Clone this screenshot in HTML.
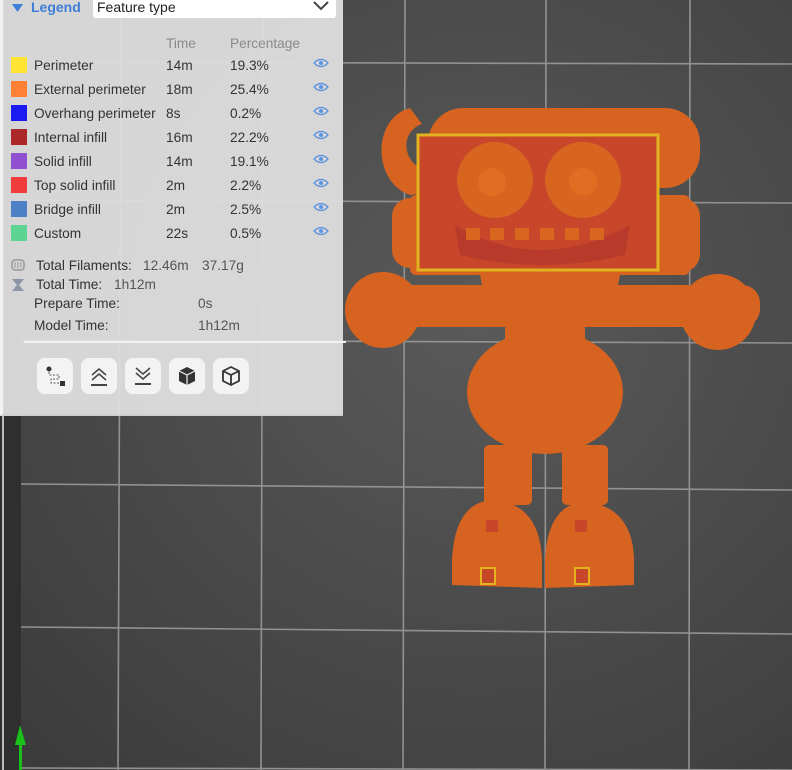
<!DOCTYPE html>
<html><head><meta charset="utf-8"><style>
*{margin:0;padding:0;box-sizing:border-box}
body{width:792px;height:770px;overflow:hidden;position:relative;background:#454545;font-family:"Liberation Sans","DejaVu Sans",sans-serif}
#bg{position:absolute;left:0;top:0}
#panel{position:absolute;left:0;top:0;width:343px;height:416px;background:rgba(222,222,222,0.95);border-left:3px solid #f2f2f2;border-bottom:2px solid #cfcfcf}
.t{position:absolute;font-size:13.7px;color:#333;white-space:nowrap;line-height:15px}
.g{color:#8a8a8a}
.sw{position:absolute;left:8px;width:16px;height:16px}
.btn{position:absolute;top:358px;width:36px;height:36px;background:#f3f3f3;border-radius:8px}
</style></head><body>
<svg id="bg" width="792" height="770">
<defs><radialGradient id="rg" cx="0.6" cy="0.4" r="0.8"><stop offset="0" stop-color="#5a5a5a"/><stop offset="1" stop-color="#3c3c3c"/></radialGradient></defs>
<rect width="792" height="770" fill="url(#rg)"/>
<rect x="0" y="0" width="21" height="770" fill="#2f2f2f"/>
<g stroke="#9a9a9a" stroke-width="1.6" opacity="0.9">
<line x1="121" y1="0" x2="118" y2="770"/><line x1="263" y1="0" x2="261" y2="770"/><line x1="405" y1="0" x2="403" y2="770"/><line x1="546" y1="0" x2="545" y2="770"/><line x1="690" y1="0" x2="689" y2="770"/>
<line x1="21" y1="62" x2="792" y2="64"/><line x1="21" y1="200" x2="792" y2="203"/><line x1="21" y1="340" x2="792" y2="343"/><line x1="21" y1="484" x2="792" y2="490"/><line x1="21" y1="627" x2="792" y2="634"/><line x1="21" y1="768" x2="792" y2="770"/>
</g>
<line x1="3" y1="0" x2="3" y2="770" stroke="#bbb" stroke-width="2"/>
<path d="M20 725 L15 745 L19 745 L19 770 L22 770 L22 745 L26 745 Z" fill="#19c019"/>
<g fill="#d6631f">
<path d="M410 108 C372 118 372 182 410 195 L432 192 L432 172 C402 168 398 132 422 124 Z"/>
<rect x="428" y="108" width="272" height="80" rx="35"/>
<rect x="392" y="198" width="40" height="70" rx="18"/>
<rect x="655" y="198" width="45" height="74" rx="18"/>
<rect x="410" y="195" width="280" height="80" rx="6"/>
<rect x="418" y="135" width="240" height="135" fill="#c8472a"/>
<rect x="418" y="135" width="240" height="135" fill="none" stroke="#e0b31f" stroke-width="3"/>
<circle cx="495" cy="180" r="38" fill="#d8651f"/><circle cx="583" cy="180" r="38" fill="#d8651f"/>
<circle cx="492" cy="182" r="14" fill="#e06d22"/><circle cx="583" cy="182" r="14" fill="#e06d22"/>
<path d="M455 225 Q540 275 630 225 L625 255 Q540 275 460 255 Z" fill="#b83a2a"/>
<g fill="#d9661f"><rect x="466" y="228" width="14" height="12"/><rect x="490" y="228" width="14" height="12"/><rect x="515" y="228" width="14" height="12"/><rect x="540" y="228" width="14" height="12"/><rect x="565" y="228" width="14" height="12"/><rect x="590" y="228" width="14" height="12"/></g>
<rect x="390" y="285" width="370" height="42" rx="18"/>
<circle cx="383" cy="310" r="38"/><circle cx="718" cy="312" r="38"/>
<path d="M480 275 L620 275 L610 325 L490 325 Z"/>
<ellipse cx="545" cy="392" rx="78" ry="62"/>
<rect x="505" y="320" width="80" height="40" rx="10"/>
<rect x="484" y="445" width="48" height="60" rx="5"/><rect x="562" y="445" width="46" height="60" rx="5"/>
<path d="M452 585 L452 560 Q455 500 495 500 Q540 505 542 560 L542 588 Z"/>
<path d="M545 588 L545 560 Q548 500 590 502 Q633 510 634 560 L634 585 Z"/>
<rect x="486" y="520" width="12" height="12" fill="#c8472a"/><rect x="575" y="520" width="12" height="12" fill="#c8472a"/>
<rect x="481" y="568" width="14" height="16" fill="#c8472a" stroke="#e0b31f" stroke-width="2"/><rect x="575" y="568" width="14" height="16" fill="#c8472a" stroke="#e0b31f" stroke-width="2"/>
</g>
</svg>
<div id="panel">
<svg style="position:absolute;left:9px;top:3px" width="12" height="10"><path d="M0 1 L11 1 L5.5 9 Z" fill="#3d7fd6"/></svg>
<div class="t" style="left:28px;top:0px;color:#3d7fd6;font-weight:bold;font-size:14px">Legend</div>
<div style="position:absolute;left:90px;top:-4px;width:243px;height:22px;background:#fff;border-radius:3px"></div>
<div class="t" style="left:94px;top:0px;font-size:14px;color:#222">Feature type</div>
<svg style="position:absolute;left:310px;top:1px" width="16" height="10"><path d="M1 1 L8 8 L15 1" stroke="#444" stroke-width="2" fill="none"/></svg>
<div class="t g" style="left:163px;top:36px">Time</div>
<div class="t g" style="left:227px;top:36px">Percentage</div>

<div class="sw" style="top:57px;background:#ffe433"></div><div class="t" style="left:31px;top:58px">Perimeter</div><div class="t" style="left:163px;top:58px">14m</div><div class="t" style="left:227px;top:58px">19.3%</div>
<div class="sw" style="top:81px;background:#ff7f35"></div><div class="t" style="left:31px;top:82px">External perimeter</div><div class="t" style="left:163px;top:82px">18m</div><div class="t" style="left:227px;top:82px">25.4%</div>
<div class="sw" style="top:105px;background:#1c1cf2"></div><div class="t" style="left:31px;top:106px">Overhang perimeter</div><div class="t" style="left:163px;top:106px">8s</div><div class="t" style="left:227px;top:106px">0.2%</div>
<div class="sw" style="top:129px;background:#ab2828"></div><div class="t" style="left:31px;top:130px">Internal infill</div><div class="t" style="left:163px;top:130px">16m</div><div class="t" style="left:227px;top:130px">22.2%</div>
<div class="sw" style="top:153px;background:#9150d0"></div><div class="t" style="left:31px;top:154px">Solid infill</div><div class="t" style="left:163px;top:154px">14m</div><div class="t" style="left:227px;top:154px">19.1%</div>
<div class="sw" style="top:177px;background:#f03c3c"></div><div class="t" style="left:31px;top:178px">Top solid infill</div><div class="t" style="left:163px;top:178px">2m</div><div class="t" style="left:227px;top:178px">2.2%</div>
<div class="sw" style="top:201px;background:#4d80c4"></div><div class="t" style="left:31px;top:202px">Bridge infill</div><div class="t" style="left:163px;top:202px">2m</div><div class="t" style="left:227px;top:202px">2.5%</div>
<div class="sw" style="top:225px;background:#5ed492"></div><div class="t" style="left:31px;top:226px">Custom</div><div class="t" style="left:163px;top:226px">22s</div><div class="t" style="left:227px;top:226px">0.5%</div>

<svg style="position:absolute;left:310px;top:56px" width="18" height="180">
<g fill="none" stroke="#5b93e0" stroke-width="1.3">
<path d="M1 7 Q8 0 15 7 Q8 14 1 7Z"/><path d="M1 31 Q8 24 15 31 Q8 38 1 31Z"/><path d="M1 55 Q8 48 15 55 Q8 62 1 55Z"/><path d="M1 79 Q8 72 15 79 Q8 86 1 79Z"/><path d="M1 103 Q8 96 15 103 Q8 110 1 103Z"/><path d="M1 127 Q8 120 15 127 Q8 134 1 127Z"/><path d="M1 151 Q8 144 15 151 Q8 158 1 151Z"/><path d="M1 175 Q8 168 15 175 Q8 182 1 175Z"/>
</g>
<g fill="#5b93e0"><circle cx="8" cy="7" r="2"/><circle cx="8" cy="31" r="2"/><circle cx="8" cy="55" r="2"/><circle cx="8" cy="79" r="2"/><circle cx="8" cy="103" r="2"/><circle cx="8" cy="127" r="2"/><circle cx="8" cy="151" r="2"/><circle cx="8" cy="175" r="2"/></g>
</svg>

<svg style="position:absolute;left:8px;top:259px" width="14" height="32"><rect x="1" y="1" width="12" height="10" rx="3" fill="none" stroke="#999" stroke-width="1.5"/><path d="M4 3v6M7 3v6M10 3v6" stroke="#999"/><path d="M1 20h12L8 26l5 6H1l5-6Z" fill="#8a96a8"/></svg>
<div class="t" style="left:33px;top:258px">Total Filaments:</div><div class="t" style="left:140px;top:258px;color:#555">12.46m</div><div class="t" style="left:199px;top:258px;color:#555">37.17g</div>
<div class="t" style="left:33px;top:277px">Total Time:</div><div class="t" style="left:111px;top:277px;color:#555">1h12m</div>
<div class="t" style="left:31px;top:296px">Prepare Time:</div><div class="t" style="left:195px;top:296px;color:#555">0s</div>
<div class="t" style="left:31px;top:318px">Model Time:</div><div class="t" style="left:195px;top:318px;color:#555">1h12m</div>
<div style="position:absolute;left:21px;top:341px;width:322px;height:2px;background:#f2f2f2"></div>

<div class="btn" style="left:34px"><svg width="36" height="36"><circle cx="12" cy="11" r="2.5" fill="#333"/><path d="M12 14v3h10v4h-8v4h12" stroke="#555" stroke-dasharray="2 1.5" fill="none"/><rect x="23" y="23" width="5" height="5" fill="#333"/></svg></div>
<div class="btn" style="left:78px"><svg width="36" height="36"><path d="M11 17l7-6 7 6M11 22l7-6 7 6" stroke="#444" stroke-width="1.5" fill="none"/><path d="M10 27h16" stroke="#444" stroke-width="2"/></svg></div>
<div class="btn" style="left:122px"><svg width="36" height="36"><path d="M11 10l7 6 7-6M11 15l7 6 7-6" stroke="#444" stroke-width="1.5" fill="none"/><path d="M10 26h16" stroke="#444" stroke-width="2"/></svg></div>
<div class="btn" style="left:166px"><svg width="36" height="36"><path d="M18 9l8 4v10l-8 4-8-4V13Z" fill="#333"/><path d="M10 13l8 4 8-4M18 17v10" stroke="#f3f3f3" stroke-width="1.2" fill="none"/></svg></div>
<div class="btn" style="left:210px"><svg width="36" height="36"><path d="M18 9l8 4v10l-8 4-8-4V13Z M10 13l8 4 8-4M18 17v10" stroke="#333" stroke-width="1.8" fill="none" stroke-linejoin="round"/></svg></div>
</div>
</body></html>
